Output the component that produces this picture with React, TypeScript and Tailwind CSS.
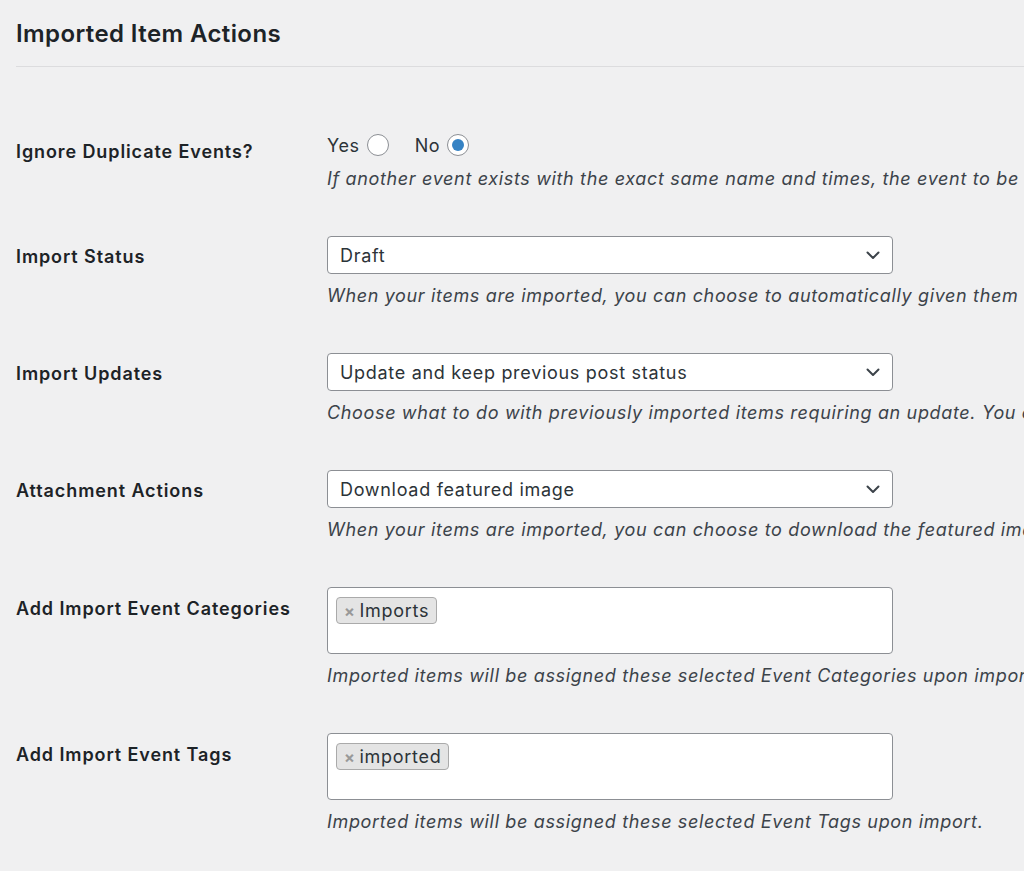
import React from 'react';

const font = { fontFamily: 'Inter, "Noto Sans", sans-serif' };

const Chevron = () => (
  <svg width="14" height="9" viewBox="0 0 14 9" fill="none" className="shrink-0">
    <path d="M1.5 1.5 7 7l5.5-5.5" stroke="#3c434a" strokeWidth="2" strokeLinecap="round" strokeLinejoin="round" />
  </svg>
);

const Radio = ({ checked }: { checked?: boolean }) => (
  <span className="ml-[7px] flex h-[22px] w-[22px] items-center justify-center rounded-full border border-[#8c8f94] bg-white">
    {checked && <span className="h-[12px] w-[12px] rounded-full bg-[#3582c4]" />}
  </span>
);

const Select = ({ value }: { value: string }) => (
  <div className="flex h-[38px] w-[566px] items-center justify-between rounded-[4px] border border-[#8c8f94] bg-white pl-[12px] pr-[12px] text-[18px] tracking-[0.7px] text-[#2c3338]">
    <span>{value}</span>
    <Chevron />
  </div>
);

const Tags = ({ tag }: { tag: string }) => (
  <div className="h-[67px] w-[566px] rounded-[4px] border border-[#8c8f94] bg-white pl-[8px] pt-[9px]">
    <span className="inline-flex h-[27px] items-center rounded-[4px] border border-[#aaa] bg-[#e4e4e4] pl-[7px] pr-[7px] text-[18px] tracking-[0.7px] text-[#2c3338]">
      <span className="mr-[4px] text-[16px] font-bold text-[#999]">×</span>
      {tag}
    </span>
  </div>
);

const Desc = ({ children }: { children: React.ReactNode }) => (
  <p className="mt-[10px] whitespace-nowrap text-[18px] leading-[24px] tracking-[0.65px] italic text-[#3c434a]">{children}</p>
);

const Row = ({ label, labelPt, children }: { label: string; labelPt: string; children: React.ReactNode }) => (
  <div className="flex pb-[45px]">
    <div className={`w-[311px] shrink-0 text-[18px] font-semibold leading-[24px] tracking-[0.9px] text-[#1d2327] ${labelPt}`}>{label}</div>
    <div className="min-w-0 flex-1">{children}</div>
  </div>
);

export default function App() {
  return (
    <div className="h-[871px] w-[1024px] overflow-hidden bg-[#f0f0f1] pl-[16px]" style={font}>
      <h2 className="pt-[19px] pb-[17px] text-[24px] font-semibold leading-[30px] tracking-[0.4px] text-[#1d2327]">Imported Item Actions</h2>
      <div className="h-px bg-[#dcdcde]" />
      <div className="pt-[66px]">
        <Row label="Ignore Duplicate Events?" labelPt="pt-[7px]">
          <div className="flex h-[24px] items-center text-[18px] tracking-[0.6px] text-[#2c3338]">
            <span>Yes</span>
            <Radio />
            <span className="ml-[26px]">No</span>
            <Radio checked />
          </div>
          <Desc>If another event exists with the exact same name and times, the event to be imported will be skipped.</Desc>
        </Row>
        <Row label="Import Status" labelPt="pt-[9px]">
          <Select value="Draft" />
          <Desc>When your items are imported, you can choose to automatically given them a status.</Desc>
        </Row>
        <Row label="Import Updates" labelPt="pt-[9px]">
          <Select value="Update and keep previous post status" />
          <Desc>Choose what to do with previously imported items requiring an update. You can choose.</Desc>
        </Row>
        <Row label="Attachment Actions" labelPt="pt-[9px]">
          <Select value="Download featured image" />
          <Desc>When your items are imported, you can choose to download the featured image.</Desc>
        </Row>
        <Row label="Add Import Event Categories" labelPt="pt-[10px]">
          <Tags tag="Imports" />
          <Desc>Imported items will be assigned these selected Event Categories upon import.</Desc>
        </Row>
        <Row label="Add Import Event Tags" labelPt="pt-[10px]">
          <Tags tag="imported" />
          <Desc>Imported items will be assigned these selected Event Tags upon import.</Desc>
        </Row>
      </div>
    </div>
  );
}
